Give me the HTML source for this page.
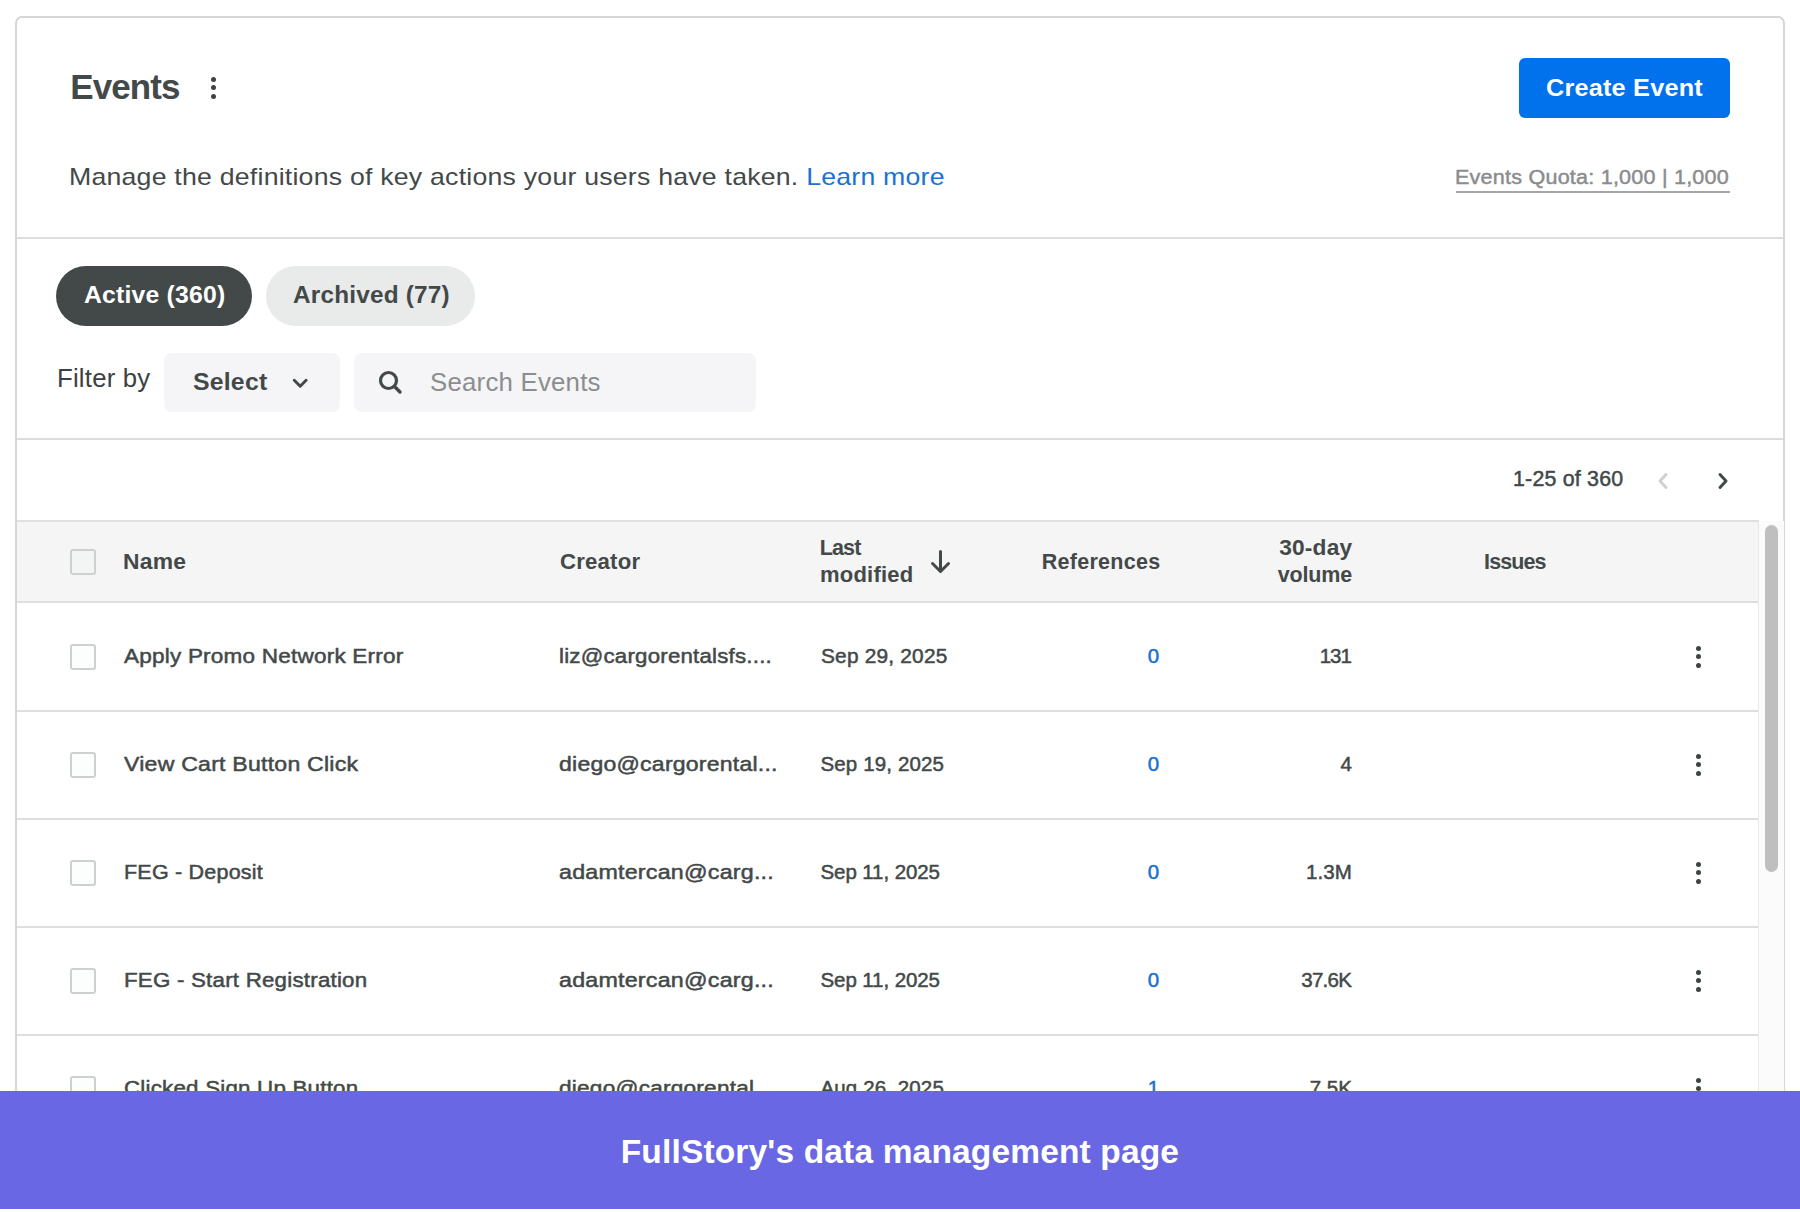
<!DOCTYPE html>
<html><head><meta charset="utf-8">
<style>
html,body{margin:0;padding:0;}
body{width:1800px;height:1212px;position:relative;overflow:hidden;background:#fff;font-family:"Liberation Sans",sans-serif;color:#434949;}
.a{position:absolute;white-space:nowrap;}
.card{position:absolute;left:15px;top:16px;width:1766px;height:1300px;border:2px solid #d6d6d6;border-radius:7px;background:#fff;}
.hr{position:absolute;left:17px;width:1766px;height:2px;background:#dddddd;}
.pill{position:absolute;border-radius:30px;}
.box{position:absolute;background:#f5f5f7;border-radius:8px;}
.cb{position:absolute;width:22px;height:22px;border:2px solid #cdd0d0;border-radius:3px;background:#fcfdfd;}
.rowline{position:absolute;left:17px;width:1741px;height:2px;background:#dedede;}
.t{font-size:20.5px;line-height:20.5px;-webkit-text-stroke:0.5px currentColor;color:#434949;}
.blue{color:#1a72d2;}
.dots{position:absolute;width:5px;}
.dots i{display:block;width:5px;height:5px;border-radius:50%;background:#3e4444;margin-bottom:3.4px;}
</style></head>
<body>
<div class="card"></div>
<div class="dots" style="left:211px;top:77px;"><i></i><i></i><i></i></div>
<div class="a" style="left:1519px;top:58px;width:211px;height:60px;background:#0171ec;border-radius:6px;"></div>
<div class="a" style="left:1456px;top:191px;width:274px;height:2px;background:#a4a6a7;"></div>
<div class="hr" style="top:237px;"></div>
<div class="pill" style="left:56px;top:266px;width:196px;height:60px;background:#434949;"></div>
<div class="pill" style="left:266px;top:266px;width:209px;height:60px;background:#e9ebeb;"></div>
<div class="box" style="left:164px;top:353px;width:176px;height:59px;"></div>
<svg class="a" style="left:290px;top:375px;" width="20" height="16" viewBox="0 0 20 16"><path d="M4.3 5.3 L10.2 11.2 L16.1 5.3" fill="none" stroke="#434949" stroke-width="3" stroke-linecap="round" stroke-linejoin="round"/></svg>
<div class="box" style="left:354px;top:353px;width:402px;height:59px;"></div>
<svg class="a" style="left:376px;top:368px;" width="30" height="30" viewBox="0 0 30 30"><circle cx="12.5" cy="12.5" r="8" fill="none" stroke="#434949" stroke-width="3.2"/><path d="M18.5 18.5 L24 24" stroke="#434949" stroke-width="3.4" stroke-linecap="round"/></svg>
<div class="hr" style="top:438px;"></div>
<svg class="a" style="left:1655px;top:471px;" width="16" height="20" viewBox="0 0 16 20"><path d="M11 3.5 L5 10 L11 16.5" fill="none" stroke="#cfd1d1" stroke-width="3" stroke-linecap="round" stroke-linejoin="round"/></svg>
<svg class="a" style="left:1715px;top:471px;" width="16" height="20" viewBox="0 0 16 20"><path d="M5 3.5 L11 10 L5 16.5" fill="none" stroke="#434949" stroke-width="3" stroke-linecap="round" stroke-linejoin="round"/></svg>
<div class="a" style="left:17px;top:520px;width:1742px;height:83px;background:#f5f5f5;border-top:2px solid #e0e0e0;border-bottom:2px solid #dedede;box-sizing:border-box;"></div>
<div class="cb" style="left:70px;top:549px;background:#f3f4f4;"></div>
<svg class="a" style="left:928px;top:548px;" width="25" height="28" viewBox="0 0 25 28"><path d="M12.5 3.5 V23.5 M4.5 15.5 L12.5 23.5 L20.5 15.5" fill="none" stroke="#434949" stroke-width="3" stroke-linecap="round" stroke-linejoin="round"/></svg>
<div class="a" style="left:1758px;top:521px;width:26px;height:700px;background:#fbfbfb;border-left:1px solid #e9e9e9;box-sizing:border-box;"></div>
<div class="a" style="left:1765px;top:525px;width:13px;height:347px;background:#bfbfbf;border-radius:7px;"></div>
<div class="a t" style="left:123.75px;top:646.42px;letter-spacing:0.200px;transform:scaleX(1.0982);transform-origin:0 0;">Apply Promo Network Error</div>
<div class="a t" style="left:558.83px;top:646.42px;letter-spacing:0.200px;transform:scaleX(1.0859);transform-origin:0 0;">liz@cargorentalsfs....</div>
<div class="a t" style="left:820.50px;top:646.42px;letter-spacing:0.200px;transform:scaleX(1.0171);transform-origin:0 0;">Sep 29, 2025</div>
<div class="a t blue" style="right:640.94px;top:646.42px;letter-spacing:0.000px;">0</div>
<div class="a t" style="right:449.09px;top:646.42px;letter-spacing:-1.000px;">131</div>
<div class="cb" style="left:70px;top:643.5px;"></div>
<div class="dots" style="left:1696.2px;top:646.0px;"><i></i><i></i><i></i></div>
<div class="rowline" style="top:710px;"></div>
<div class="a t" style="left:123.75px;top:754.42px;letter-spacing:0.200px;transform:scaleX(1.1265);transform-origin:0 0;">View Cart Button Click</div>
<div class="a t" style="left:558.83px;top:754.42px;letter-spacing:0.200px;transform:scaleX(1.1238);transform-origin:0 0;">diego@cargorental...</div>
<div class="a t" style="left:820.50px;top:754.42px;letter-spacing:0.127px;">Sep 19, 2025</div>
<div class="a t blue" style="right:640.94px;top:754.42px;letter-spacing:0.000px;">0</div>
<div class="a t" style="right:448.09px;top:754.42px;letter-spacing:0.000px;">4</div>
<div class="cb" style="left:70px;top:751.5px;"></div>
<div class="dots" style="left:1696.2px;top:754.0px;"><i></i><i></i><i></i></div>
<div class="rowline" style="top:818px;"></div>
<div class="a t" style="left:123.75px;top:862.42px;letter-spacing:0.200px;transform:scaleX(1.0488);transform-origin:0 0;">FEG - Deposit</div>
<div class="a t" style="left:558.83px;top:862.42px;letter-spacing:0.200px;transform:scaleX(1.1336);transform-origin:0 0;">adamtercan@carg...</div>
<div class="a t" style="left:820.50px;top:862.42px;letter-spacing:-0.086px;">Sep 11, 2025</div>
<div class="a t blue" style="right:640.94px;top:862.42px;letter-spacing:0.000px;">0</div>
<div class="a t" style="right:447.97px;top:862.42px;letter-spacing:0.120px;">1.3M</div>
<div class="cb" style="left:70px;top:859.5px;"></div>
<div class="dots" style="left:1696.2px;top:862.0px;"><i></i><i></i><i></i></div>
<div class="rowline" style="top:926px;"></div>
<div class="a t" style="left:123.75px;top:970.42px;letter-spacing:0.200px;transform:scaleX(1.0887);transform-origin:0 0;">FEG - Start Registration</div>
<div class="a t" style="left:558.83px;top:970.42px;letter-spacing:0.200px;transform:scaleX(1.1336);transform-origin:0 0;">adamtercan@carg...</div>
<div class="a t" style="left:820.50px;top:970.42px;letter-spacing:-0.086px;">Sep 11, 2025</div>
<div class="a t blue" style="right:640.94px;top:970.42px;letter-spacing:0.000px;">0</div>
<div class="a t" style="right:448.84px;top:970.42px;letter-spacing:-0.742px;">37.6K</div>
<div class="cb" style="left:70px;top:967.5px;"></div>
<div class="dots" style="left:1696.2px;top:970.0px;"><i></i><i></i><i></i></div>
<div class="rowline" style="top:1034px;"></div>
<div class="a t" style="left:123.75px;top:1078.42px;letter-spacing:0.200px;transform:scaleX(1.0888);transform-origin:0 0;">Clicked Sign Up Button</div>
<div class="a t" style="left:558.83px;top:1078.42px;letter-spacing:0.200px;transform:scaleX(1.1038);transform-origin:0 0;">diego@cargorental...</div>
<div class="a t" style="left:820.50px;top:1078.42px;letter-spacing:0.119px;">Aug 26, 2025</div>
<div class="a t blue" style="right:640.94px;top:1078.42px;letter-spacing:0.000px;">1</div>
<div class="a t" style="right:448.09px;top:1078.42px;letter-spacing:0.000px;">7.5K</div>
<div class="cb" style="left:70px;top:1075.5px;"></div>
<div class="dots" style="left:1696.2px;top:1078.0px;"><i></i><i></i><i></i></div>
<div class="a" style="left:0;top:1091px;width:1800px;height:118px;background:#6967e4;"></div>
<div class="a" style="left:0;top:1209px;width:1800px;height:3px;background:#fff;"></div>
<div class="a" style="left:70.20px;top:69.25px;font-size:35px;line-height:35px;font-weight:bold;color:#434949;letter-spacing:-0.900px;">Events</div>
<div class="a" style="left:1546.10px;top:75.56px;font-size:24px;line-height:24px;font-weight:bold;color:#ffffff;letter-spacing:0.200px;transform:scaleX(1.0523);transform-origin:0 0;">Create Event</div>
<div class="a" style="left:69.20px;top:165.08px;font-size:24px;line-height:24px;font-weight:normal;color:#434949;letter-spacing:0.200px;transform:scaleX(1.1114);transform-origin:0 0;">Manage the definitions of key actions your users have taken. <span style="color:#1a72d2">Learn more</span></div>
<div class="a" style="left:1455.20px;top:166.73px;font-size:20px;line-height:20px;font-weight:normal;color:#8a8c8d;letter-spacing:0.200px;transform:scaleX(1.0783);transform-origin:0 0;-webkit-text-stroke:0.45px currentColor;">Events Quota: 1,000 | 1,000</div>
<div class="a" style="left:84.00px;top:282.60px;font-size:24px;line-height:24px;font-weight:bold;color:#ffffff;letter-spacing:0.200px;transform:scaleX(1.0311);transform-origin:0 0;">Active (360)</div>
<div class="a" style="left:292.50px;top:282.60px;font-size:24px;line-height:24px;font-weight:bold;color:#434949;letter-spacing:0.200px;transform:scaleX(1.0142);transform-origin:0 0;">Archived (77)</div>
<div class="a" style="left:57.10px;top:365.71px;font-size:25px;line-height:25px;font-weight:normal;color:#3d4042;letter-spacing:0.200px;transform:scaleX(1.0302);transform-origin:0 0;">Filter by</div>
<div class="a" style="left:192.50px;top:370.06px;font-size:24.5px;line-height:24.5px;font-weight:bold;color:#434949;letter-spacing:0.200px;transform:scaleX(1.0134);transform-origin:0 0;">Select</div>
<div class="a" style="left:430.10px;top:370.19px;font-size:25px;line-height:25px;font-weight:normal;color:#8b8d8e;letter-spacing:0.200px;transform:scaleX(1.0333);transform-origin:0 0;">Search Events</div>
<div class="a" style="left:1513.16px;top:468.38px;font-size:21.2px;line-height:21.2px;font-weight:normal;color:#434949;letter-spacing:0.200px;transform:scaleX(1.0084);transform-origin:0 0;-webkit-text-stroke:0.5px currentColor;">1-25 of 360</div>
<div class="a" style="left:123.08px;top:551.60px;font-size:21.5px;line-height:21.5px;font-weight:bold;color:#434949;letter-spacing:0.200px;transform:scaleX(1.0648);transform-origin:0 0;">Name</div>
<div class="a" style="left:559.50px;top:551.60px;font-size:21.5px;line-height:21.5px;font-weight:bold;color:#434949;letter-spacing:0.200px;transform:scaleX(1.0311);transform-origin:0 0;">Creator</div>
<div class="a" style="left:819.64px;top:538.10px;font-size:21.5px;line-height:21.5px;font-weight:bold;color:#434949;letter-spacing:-0.840px;">Last</div>
<div class="a" style="left:820.10px;top:565.05px;font-size:21.5px;line-height:21.5px;font-weight:bold;color:#434949;letter-spacing:0.200px;transform:scaleX(1.0242);transform-origin:0 0;">modified</div>
<div class="a" style="left:1041.64px;top:551.60px;font-size:21.5px;line-height:21.5px;font-weight:bold;color:#434949;letter-spacing:0.300px;">References</div>
<div class="a" style="right:448.04px;top:538.37px;font-size:21.5px;line-height:21.5px;font-weight:bold;color:#434949;letter-spacing:0.200px;transform:scaleX(1.0558);transform-origin:100% 0;">30-day</div>
<div class="a" style="right:448.00px;top:565.05px;font-size:21.5px;line-height:21.5px;font-weight:bold;color:#434949;letter-spacing:-0.180px;">volume</div>
<div class="a" style="left:1484.10px;top:551.60px;font-size:21.5px;line-height:21.5px;font-weight:bold;color:#434949;letter-spacing:-0.900px;">Issues</div>
<div class="a" style="left:620.72px;top:1134.97px;font-size:33.5px;line-height:33.5px;font-weight:bold;color:#ffffff;letter-spacing:0.157px;">FullStory's data management page</div>
</body></html>
